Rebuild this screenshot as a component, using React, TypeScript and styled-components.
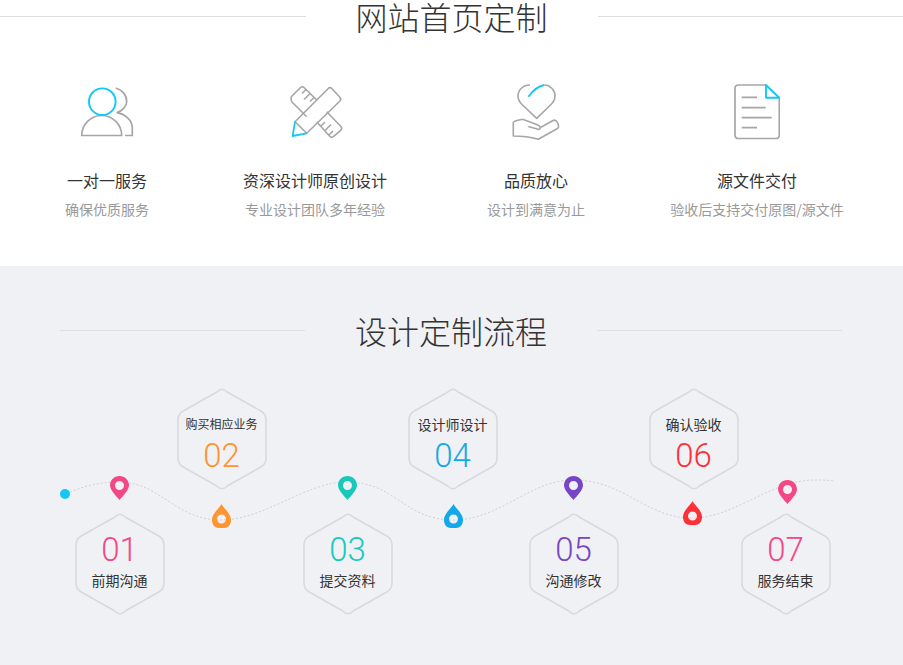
import { Fragment } from "react";
import styled, { createGlobalStyle } from "styled-components";

const ACCENT = "#14c8f5";
const ICON = "#a6a6a6";
const FONT = `"Noto Sans CJK SC", "Noto Sans", sans-serif`;

const GlobalStyle = createGlobalStyle`
  html, body {
    margin: 0;
    padding: 0;
    background: #fff;
    font-family: ${FONT};
  }
`;

const features = [
  { id: "service", title: "一对一服务", sub: "确保优质服务" },
  { id: "design", title: "资深设计师原创设计", sub: "专业设计团队多年经验" },
  { id: "quality", title: "品质放心", sub: "设计到满意为止" },
  { id: "files", title: "源文件交付", sub: "验收后支持交付原图/源文件" },
];

// places on the wave diagram, relative to the top left of the canvas
const steps = [
  { num: "01", label: "前期沟通", color: "#f44786", x: 74.5, y: 133, down: true, mark: "pin", mx: 110, my: 96 },
  { num: "02", label: "购买相应业务", color: "#ff9431", x: 176.5, y: 8, small: true, down: false, mark: "drop", mx: 212, my: 124 },
  { num: "03", label: "提交资料", color: "#17c9bb", x: 302.5, y: 133, down: true, mark: "pin", mx: 338, my: 96 },
  { num: "04", label: "设计师设计", color: "#13a8e9", x: 407.5, y: 8, down: false, mark: "drop", mx: 444, my: 124 },
  { num: "05", label: "沟通修改", color: "#7746c4", x: 528.5, y: 133, down: true, mark: "pin", mx: 564, my: 96 },
  { num: "06", label: "确认验收", color: "#ff2f36", x: 648.5, y: 8, down: false, mark: "drop", mx: 683, my: 121 },
  { num: "07", label: "服务结束", color: "#f44786", x: 740.5, y: 133, down: true, mark: "pin", mx: 778, my: 100 },
];

function FeatureIcon({ id }: { id: string }) {
  if (id === "service") {
    return (
      <svg width="54" height="50" viewBox="0 0 54 50" fill="none" stroke={ICON} strokeWidth="1.7">
        <path d="M1.700 48.500A20 20 0 0 1 41.700 48.500Z" />
        <path d="M35.700 1C42 2.500 46.700 8 46.700 14.700C46.700 19 42 24.500 36.700 25.700C45 27 52.300 33 52.300 41V48.500H45" />
        <circle cx="22.300" cy="14.700" r="13.300" stroke={ACCENT} strokeWidth="1.900" />
      </svg>
    );
  }
  if (id === "design") {
    return (
      <svg width="56" height="56" viewBox="0 0 56 56" fill="none" stroke={ICON} strokeWidth="1.600" strokeLinejoin="round">
        <path d="M29.700 16L17.300 3.700Q15.300 1.700 13.300 3.700L5 12Q3 14 5 18L19.700 32.700" />
        <path d="M19 5.500L15 9.500M23 9.500L17 15.500M27 13.500L23 17.500" />
        <path d="M39.700 27.700L53.700 42.300Q55.700 44.300 53.700 46.300L46.700 52.300Q44.700 54.300 42.700 52.300L29.700 37.700" />
        <path d="M34 42L38 38M38 46.500L44 40.500M42 51L46 47" />
        <path d="M8 37.700L41 4.700Q43 2.700 45 4.700L52.700 13Q54.700 15.300 52.700 17.300L19.700 49.300Z" />
        <path d="M8 37.700L5.700 52L19.700 49.300" stroke={ACCENT} strokeWidth="1.800" />
      </svg>
    );
  }
  if (id === "quality") {
    return (
      <svg width="48" height="56" viewBox="0 0 48 56" fill="none" stroke={ICON} strokeWidth="1.600" strokeLinejoin="round">
        <path d="M18 1C11 1 6 6 6 12C6 16 8 18.500 10 20.500L24.700 34.300L39 20.500C41 18.500 43 16 43 12C43 6 38 1 32.300 1" />
        <path d="M16.300 12.700C21 6.500 26 2 32.300 1" stroke={ACCENT} strokeWidth="1.800" />
        <path d="M1.300 37.700C5 37 8 35 11.300 35.500L26 41C28.500 42 29 45 27 45.500L16.300 42.500" />
        <path d="M1.300 37.700V52C10 52 18 53 26.300 55.300L45.500 44.500C48 42.500 45 34.500 41 36.500L28.500 43.500" />
      </svg>
    );
  }
  return (
    <svg width="46" height="56" viewBox="0 0 46 56" fill="none" stroke={ICON} strokeWidth="1.700" strokeLinejoin="round">
      <path d="M32 1H4C2.500 1 1 2.500 1 4V51.500C1 53 2.500 54.500 4 54.500H42.300C43.800 54.500 45.300 53 45.300 51.500V13.700" />
      <path d="M32 1V13.700H45.300Z" stroke={ACCENT} strokeWidth="1.900" />
      <path d="M7.700 13.300H23M7.700 23.700H31.700M7.700 33.700H37.700M7.700 43.700H23" />
    </svg>
  );
}

function Marker({ kind, color }: { kind: string; color: string }) {
  if (kind === "pin") {
    return (
      <svg width="19" height="24" viewBox="0 0 19 24">
        <path
          fillRule="evenodd"
          fill={color}
          d="M9.500 0C4.200 0 0 4.200 0 9.300C0 14 6 20 9.500 24C13 20 19 14 19 9.300C19 4.200 14.800 0 9.500 0ZM9.500 5C12 5 14 7 14 9.500C14 12 12 14 9.500 14C7 14 5 12 5 9.500C5 7 7 5 9.500 5Z"
        />
      </svg>
    );
  }
  return (
    <svg width="19" height="24" viewBox="0 0 19 24">
      <path
        fillRule="evenodd"
        fill={color}
        d="M9.500 0C8 4 0 9 0 16C0 21 3 24 7 24H12C16 24 19 21 19 16C19 9 11 4 9.500 0ZM9.500 10.500C12 10.500 14 12.500 14 15C14 17.500 12 19.500 9.500 19.500C7 19.500 5 17.500 5 15C5 12.500 7 10.500 9.500 10.500Z"
      />
    </svg>
  );
}

function Hexagon() {
  return (
    <HexShape viewBox="0 0 90 102" fill="none" stroke="#d9dadf" strokeWidth="1.600">
      <path d="M39.800 4Q45 -1.500 50.200 4L83.800 23Q89 26 89 32L89 70Q89 76 83.800 79L50.200 98Q45 103.500 39.800 98L6.200 79Q1 76 1 70L1 32Q1 26 6.200 23Z" />
    </HexShape>
  );
}

export default function App() {
  return (
    <>
      <GlobalStyle />
      <TopSection>
        <Heading>
          <Rule />
          <Title>网站首页定制</Title>
          <Rule />
        </Heading>
        <FeatureGrid>
          {features.map((f) => (
            <Feature key={f.id}>
              <IconBox>
                <FeatureIcon id={f.id} />
              </IconBox>
              <FeatureTitle>{f.title}</FeatureTitle>
              <FeatureSub>{f.sub}</FeatureSub>
            </Feature>
          ))}
        </FeatureGrid>
      </TopSection>
      <FlowSection>
        <FlowHeading>
          <Rule />
          <Title>设计定制流程</Title>
          <Rule />
        </FlowHeading>
        <Canvas>
          <Wave width="903" height="285" viewBox="0 0 903 285" fill="none">
            <path
              stroke="#cfd0d4"
              strokeDasharray="2 2"
              d="M70 112C85 106 100 102 119 102C160 102 175 140 221 140C265 140 305 102 347 102C395 102 405 140 453 140C500 140 530 100 573 100C625 100 645 138 692 138C735 138 770 100 815 100Q826 100 835 101"
            />
          </Wave>
          <StartDot />
          {steps.map((s) => (
            <Fragment key={s.num}>
              <MarkerSpot $x={s.mx} $y={s.my}>
                <Marker kind={s.mark} color={s.color} />
              </MarkerSpot>
              <HexNode $x={s.x} $y={s.y} $down={s.down}>
                <Hexagon />
                <Num $color={s.color}>{s.num}</Num>
                <StepLabel $small={s.small}>{s.label}</StepLabel>
              </HexNode>
            </Fragment>
          ))}
        </Canvas>
      </FlowSection>
    </>
  );
}

const TopSection = styled.section`
  height: 266px;
  background: #fff;
`;

const Heading = styled.div`
  display: flex;
  align-items: center;
  height: 32px;
`;

const FlowHeading = styled(Heading)`
  padding: 0 61px 0 60px;
`;

const Rule = styled.div`
  flex: 1;
  height: 1px;
  background: #dedede;
`;

const Title = styled.h2`
  margin: 0 50px;
  font-size: 32px;
  line-height: 32px;
  font-weight: 300;
  color: #333;
  white-space: nowrap;
`;

const FeatureGrid = styled.div`
  display: grid;
  grid-template-columns: 214px 202px 240px 202px;
  margin-top: 50px;
`;

const Feature = styled.div`
  display: flex;
  flex-direction: column;
  align-items: center;
`;

const IconBox = styled.div`
  display: flex;
  align-items: center;
  justify-content: center;
  height: 60px;
`;

const FeatureTitle = styled.div`
  margin-top: 26px;
  font-size: 16px;
  line-height: 24px;
  color: #333;
`;

const FeatureSub = styled.div`
  margin-top: 7px;
  font-size: 14px;
  line-height: 20px;
  color: #999;
  white-space: nowrap;
`;

const FlowSection = styled.section`
  height: 399px;
  padding-top: 48px;
  box-sizing: border-box;
  background: #f0f1f5;
`;

const Canvas = styled.div`
  position: relative;
  height: 285px;
  margin-top: 34px;
`;

const Wave = styled.svg`
  position: absolute;
  left: 0;
  top: 0;
`;

const StartDot = styled.div`
  position: absolute;
  left: 60px;
  top: 109px;
  width: 10px;
  height: 10px;
  border-radius: 50%;
  background: ${ACCENT};
`;

const MarkerSpot = styled.div<{ $x: number; $y: number }>`
  position: absolute;
  left: ${(p) => p.$x}px;
  top: ${(p) => p.$y}px;
  display: flex;
`;

const HexNode = styled.div<{ $x: number; $y: number; $down?: boolean }>`
  position: absolute;
  left: ${(p) => p.$x}px;
  top: ${(p) => p.$y}px;
  width: 90px;
  height: 102px;
  display: flex;
  flex-direction: ${(p) => (p.$down ? "column" : "column-reverse")};
  justify-content: ${(p) => (p.$down ? "flex-start" : "flex-end")};
  align-items: center;
  gap: ${(p) => (p.$down ? "0" : "2px")};
  padding-top: ${(p) => (p.$down ? "17px" : "26px")};
  box-sizing: border-box;
`;

const HexShape = styled.svg`
  position: absolute;
  left: 0;
  top: 0;
  width: 90px;
  height: 102px;
  overflow: visible;
`;

const Num = styled.div<{ $color: string }>`
  position: relative;
  font-family: Roboto, sans-serif;
  font-weight: 300;
  font-size: 33px;
  line-height: 40px;
  color: ${(p) => p.$color};
`;

const StepLabel = styled.div<{ $small?: boolean }>`
  position: relative;
  font-size: ${(p) => (p.$small ? "12px" : "14px")};
  line-height: 20px;
  color: #333;
  white-space: nowrap;
`;
